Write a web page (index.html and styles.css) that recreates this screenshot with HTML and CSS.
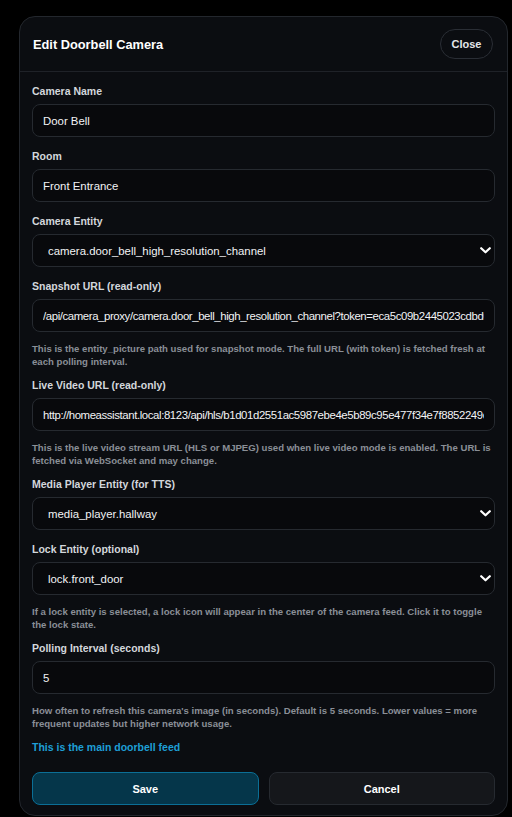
FILE: index.html
```html
<!DOCTYPE html>
<html lang="en">
<head>
<meta charset="utf-8">
<title>Edit Doorbell Camera</title>
<link rel="stylesheet" href="styles.css">
</head>
<body>
<div class="modal">
  <div class="modal-header">
    <h2 class="modal-title">Edit Doorbell Camera</h2>
    <button class="close-btn" type="button">Close</button>
  </div>
  <div class="modal-body">
    <div class="field">
      <label class="field-label">Camera Name</label>
      <input class="text-input" type="text" value="Door Bell">
    </div>
    <div class="field">
      <label class="field-label">Room</label>
      <input class="text-input" type="text" value="Front Entrance">
    </div>
    <div class="field">
      <label class="field-label">Camera Entity</label>
      <div class="select-wrap">
        <select class="select-input"><option>camera.door_bell_high_resolution_channel</option></select>
        <svg class="chevron" width="11" height="7" viewBox="0 0 11 7"><path d="M1.2 1.2 L5.5 5.3 L9.8 1.2" fill="none" stroke="#ffffff" stroke-width="2.2" stroke-linecap="round" stroke-linejoin="round"/></svg>
      </div>
    </div>
    <div class="field has-helper">
      <label class="field-label">Snapshot URL (read-only)</label>
      <input class="text-input url-input" type="text" readonly value="/api/camera_proxy/camera.door_bell_high_resolution_channel?token=eca5c09b2445023cdbd0f1a7c39e2b84">
      <p class="helper">This is the entity_picture path used for snapshot mode. The full URL (with token) is fetched fresh at each polling interval.</p>
    </div>
    <div class="field has-helper">
      <label class="field-label">Live Video URL (read-only)</label>
      <input class="text-input url-input" type="text" readonly value="http://homeassistant.local:8123/api/hls/b1d01d2551ac5987ebe4e5b89c95e477f34e7f8852249c/master_playlist.m3u8">
      <p class="helper">This is the live video stream URL (HLS or MJPEG) used when live video mode is enabled. The URL is fetched via WebSocket and may change.</p>
    </div>
    <div class="field">
      <label class="field-label">Media Player Entity (for TTS)</label>
      <div class="select-wrap">
        <select class="select-input"><option>media_player.hallway</option></select>
        <svg class="chevron" width="11" height="7" viewBox="0 0 11 7"><path d="M1.2 1.2 L5.5 5.3 L9.8 1.2" fill="none" stroke="#ffffff" stroke-width="2.2" stroke-linecap="round" stroke-linejoin="round"/></svg>
      </div>
    </div>
    <div class="field has-helper">
      <label class="field-label">Lock Entity (optional)</label>
      <div class="select-wrap">
        <select class="select-input"><option>lock.front_door</option></select>
        <svg class="chevron" width="11" height="7" viewBox="0 0 11 7"><path d="M1.2 1.2 L5.5 5.3 L9.8 1.2" fill="none" stroke="#ffffff" stroke-width="2.2" stroke-linecap="round" stroke-linejoin="round"/></svg>
      </div>
      <p class="helper">If a lock entity is selected, a lock icon will appear in the center of the camera feed. Click it to toggle the lock state.</p>
    </div>
    <div class="field has-helper">
      <label class="field-label">Polling Interval (seconds)</label>
      <input class="text-input" type="text" value="5">
      <p class="helper">How often to refresh this camera's image (in seconds). Default is 5 seconds. Lower values = more frequent updates but higher network usage.</p>
    </div>
    <p class="main-feed">This is the main doorbell feed</p>
    <div class="actions">
      <button class="btn btn-save" type="button">Save</button>
      <button class="btn btn-cancel" type="button">Cancel</button>
    </div>
  </div>
</div>
</body>
</html>
```
FILE: styles.css
```css
* { box-sizing: border-box; }
html, body { margin: 0; padding: 0; background: #000000; }
body {
  font-family: "Liberation Sans", Arial, sans-serif;
  color: #e6e8eb;
  height: 817px;
  overflow: hidden;
  padding-top: 16px;
}
.modal {
  margin-left: 19px;
  width: 489px;
  background: #0b0d11;
  border: 1px solid #23272d;
  border-radius: 16px;
  overflow: hidden;
}
.modal-header {
  display: flex;
  align-items: center;
  justify-content: space-between;
  padding: 12px 14px 12px 13px;
  border-bottom: 1px solid #1f2228;
}
.modal-title {
  margin: 0;
  font-size: 12.8px;
  font-weight: 700;
  color: #ffffff;
}
.close-btn {
  height: 30px;
  width: 53px;
  border-radius: 15px;
  border: 1px solid #2a2e35;
  background: transparent;
  color: #e4e6ea;
  font-family: inherit;
  font-size: 11px;
  font-weight: 700;
  padding: 0;
}
.modal-body {
  padding: 12px 12px 10px 12px;
}
.field {
  display: flex;
  flex-direction: column;
  margin-bottom: 12px;
}
.field.has-helper { margin-bottom: 10px; }
.field-label {
  font-size: 10.5px;
  line-height: 14px;
  font-weight: 700;
  color: #d3d7dc;
  margin-bottom: 6px;
}
.text-input, .select-input {
  width: 100%;
  height: 33px;
  background: #08090c;
  border: 1px solid #262a30;
  border-radius: 8px;
  color: #f2f3f5;
  font-family: inherit;
  font-size: 11.4px;
  padding: 0 10px;
  outline: none;
}
.url-input { letter-spacing: -0.4px; }
.select-wrap { position: relative; }
.select-input {
  appearance: none;
  -webkit-appearance: none;
  padding-left: 15px;
}
.chevron {
  position: absolute;
  right: 4px;
  top: 13px;
  pointer-events: none;
}
.helper {
  margin: 10px 0 0 0;
  font-size: 9.6px;
  line-height: 13px;
  font-weight: 700;
  color: #8a8f97;
}
.main-feed {
  margin: 0 0 18px 0;
  font-size: 10.5px;
  line-height: 14px;
  font-weight: 700;
  color: #1e9fd6;
}
.actions {
  display: flex;
  gap: 10px;
}
.btn {
  flex: 1;
  height: 33px;
  border-radius: 8px;
  font-family: inherit;
  font-size: 11px;
  font-weight: 700;
  color: #ffffff;
}
.btn-save {
  background: #05364a;
  border: 1px solid #0b6f96;
}
.btn-cancel {
  background: #15171b;
  border: 1px solid #262a30;
}
```
